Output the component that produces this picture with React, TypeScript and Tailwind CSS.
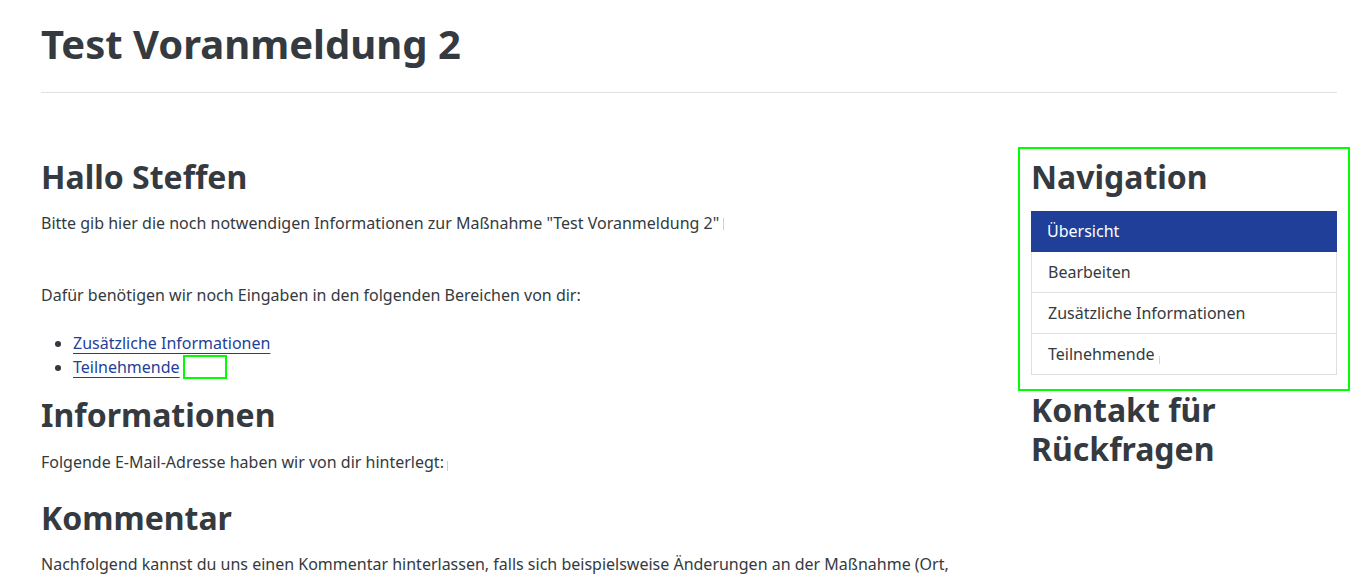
export default function App() {
  const navItems = ["Übersicht", "Bearbeiten", "Zusätzliche Informationen", "Teilnehmende"];

  return (
    <main
      className="min-h-screen bg-white text-[#343a40] pl-[41px] pr-[21px] pt-[20px]"
      style={{ fontFamily: '"Noto Sans", sans-serif' }}
    >
      {/* PAGE TITLE */}
      <h1 className="text-[40px] leading-[48px] font-bold">Test Voranmeldung 2</h1>
      <hr className="mt-[24px] border-0 h-px bg-[#dee2e6]" />

      <div className="flex gap-[24px] mt-[65px]">
        {/* MAIN COLUMN */}
        <div className="w-[966px] shrink-0">
          <h2 className="text-[32px] leading-[38px] font-bold">Hallo Steffen</h2>
          <p className="mt-[15px] text-[16px] leading-[24px]">
            Bitte gib hier die noch notwendigen Informationen zur Maßnahme "Test Voranmeldung 2"
            <span className="inline-block w-px h-[12px] ml-[4px] bg-[#d0d0d0] align-[-1px]" />
          </p>

          <p className="mt-[48px] text-[16px] leading-[24px]">
            Dafür benötigen wir noch Eingaben in den folgenden Bereichen von dir:
          </p>

          <ul className="mt-[24px] pl-[32px] list-disc text-[16px] leading-[24px]">
            <li>
              <a className="text-[#1f3f98] underline underline-offset-[4px] decoration-1" href="#">
                Zusätzliche Informationen
              </a>
            </li>
            <li>
              <a className="text-[#1f3f98] underline underline-offset-[4px] decoration-1" href="#">
                Teilnehmende
              </a>
              <span className="inline-block w-[44px] h-[24px] ml-[3px] border-2 border-[#00ff00] align-top" />
            </li>
          </ul>

          <h2 className="mt-[17px] text-[32px] leading-[38px] font-bold">Informationen</h2>
          <p className="mt-[16px] text-[16px] leading-[24px]">
            Folgende E-Mail-Adresse haben wir von dir hinterlegt:
            <span className="inline-block w-px h-[10px] ml-[3px] bg-[#d0d0d0] align-[-3px]" />
          </p>

          <h2 className="mt-[25px] text-[32px] leading-[38px] font-bold">Kommentar</h2>
          <p className="mt-[15px] text-[16px] leading-[24px]">
            Nachfolgend kannst du uns einen Kommentar hinterlassen, falls sich beispielsweise Änderungen an der Maßnahme (Ort,
            Zeitraum, Ablauf) ergeben haben.
          </p>
        </div>

        {/* SIDEBAR */}
        <aside className="w-[306px] shrink-0">
          <div className="relative">
            <div className="absolute -left-[13px] -right-[13px] -top-[11px] -bottom-[16px] border-2 border-[#00ff00]" />
            <h2 className="text-[32px] leading-[38px] font-bold">Navigation</h2>
            <div className="mt-[15px] flex flex-col">
              {navItems.map((item, i) => (
                <div
                  key={item}
                  className={
                    i === 0
                      ? "h-[41px] px-4 pt-[8px] text-[16px] leading-[24px] bg-[#1f3f98] text-white"
                      : "h-[41px] px-4 pt-[8px] text-[16px] leading-[24px] border border-t-0 border-[#dfdfdf]"
                  }
                >
                  {item}
                  {i === 3 && <span className="inline-block w-px h-[8px] ml-[4px] bg-[#f2c8c8] align-[-4px]" />}
                </div>
              ))}
            </div>
          </div>
          <h2 className="mt-[15px] text-[32px] leading-[39px] font-bold">
            Kontakt für
            <br />
            Rückfragen
          </h2>
        </aside>
      </div>
    </main>
  );
}
